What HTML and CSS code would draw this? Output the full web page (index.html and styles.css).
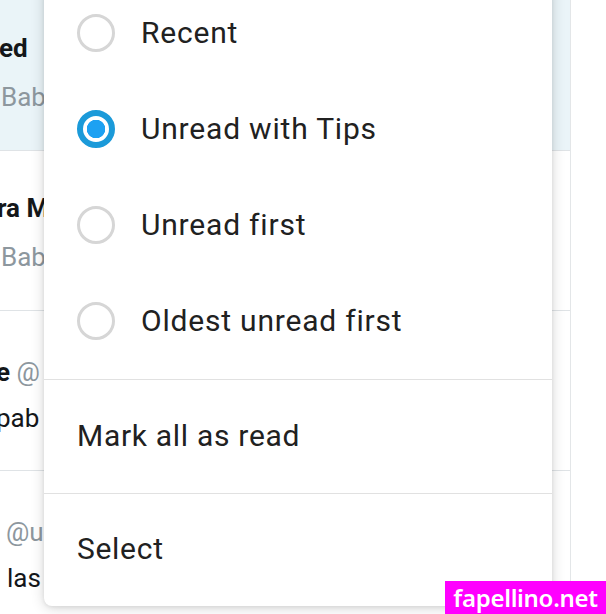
FILE: index.html
```html
<!DOCTYPE html>
<html>
<head>
<meta charset="utf-8">
<link rel="stylesheet" href="styles.css">
</head>
<body>
<div class="screen">
  <div class="list">
    <div class="row unread">
      <div class="line name s1">ed</div>
      <div class="line handle s2">Bab</div>
    </div>
    <div class="row">
      <div class="line name s3">ra M</div>
      <div class="line handle s2">Bab</div>
    </div>
    <div class="row tweet">
      <div class="line name s4">e <span class="at">@</span></div>
      <div class="line msg s4">pab</div>
    </div>
    <div class="row tweet">
      <div class="line s5"><span class="at">@u</span></div>
      <div class="line msg s6">las</div>
    </div>
  </div>

  <div class="menu">
    <div class="group">
      <div class="opt"><span class="radio"></span><span class="label">Recent</span></div>
      <div class="opt"><span class="radio on"></span><span class="label">Unread with Tips</span></div>
      <div class="opt"><span class="radio"></span><span class="label">Unread first</span></div>
      <div class="opt"><span class="radio"></span><span class="label">Oldest unread first</span></div>
    </div>
    <div class="action">Mark all as read</div>
    <div class="action">Select</div>
  </div>

  <div class="mark">fapellino.net</div>
</div>
</body>
</html>
```

FILE: styles.css
```css
html, body {
  margin: 0;
  padding: 0;
  background: #fff;
}
.screen {
  position: relative;
  width: 606px;
  height: 614px;
  overflow: hidden;
  font-family: Roboto, "Noto Sans", sans-serif;
}
.list {
  width: 570px;
  border-right: 1px solid #e3e6e8;
  height: 640px;
  margin-top: -9px;
  display: flex;
  flex-direction: column;
}
.row {
  height: 160px;
  flex: none;
  border-bottom: 1px solid #dfe3e6;
  display: flex;
  flex-direction: column;
  padding-top: 42px;
  box-sizing: border-box;
  white-space: nowrap;
  overflow: hidden;
}
.row .line {
  height: 30px;
  line-height: 30px;
  font-size: 26px;
  color: #14171a;
}
.row .line + .line {
  margin-top: 19px;
}
.row.unread {
  background: #eaf4f8;
}
.row .name {
  font-weight: 700;
}
.row .handle { color: #8d979e; }
.row .at { color: #8d979e; font-weight: 400; }
.row.tweet { padding-top: 46px; }
.row.tweet .line + .line { margin-top: 16px; }
.s1 { margin-left: -1px; }
.s2 { margin-left: 1px; }
.s3 { margin-left: -3px; }
.s4 { margin-left: -4px; }
.s5 { margin-left: 6px; }
.s6 { margin-left: 7px; }
.menu {
  position: absolute;
  left: 44px;
  top: -15px;
  width: 508px;
  background: #fff;
  border-radius: 0 0 8px 8px;
  box-shadow: 0 2px 14px rgba(0,0,0,0.16), 0 1px 4px rgba(0,0,0,0.08);
  color: #212121;
}
.group {
  padding-bottom: 10px;
  border-bottom: 1px solid #e1e1e1;
}
.opt {
  height: 96px;
  display: flex;
  align-items: center;
  padding-left: 33px;
}
.radio {
  width: 38px;
  height: 38px;
  box-sizing: border-box;
  border: 3px solid #d6d6d6;
  border-radius: 50%;
  margin-right: 26px;
  flex: none;
}
.radio.on {
  border: 6px solid #1b9ad9;
  background: radial-gradient(circle, #1da1f2 0 9px, #fff 9.5px);
}
.label {
  font-size: 30px;
  letter-spacing: 0.8px;
  margin-bottom: 2px;
}
.action {
  height: 113px;
  display: flex;
  align-items: center;
  padding-left: 33px;
  padding-bottom: 3px;
  box-sizing: border-box;
  font-size: 30px;
  letter-spacing: 0.7px;
}
.action + .action {
  border-top: 1px solid #e1e1e1;
  height: 113px;
}
.mark {
  position: absolute;
  right: 0;
  bottom: 0;
  width: 161px;
  height: 33px;
  background: #ff00ff;
  color: #fff;
  font-family: "Noto Sans", sans-serif;
  font-weight: 600;
  font-size: 24px;
  letter-spacing: -0.3px;
  line-height: 33px;
  text-align: center;
  white-space: nowrap;
}
```
